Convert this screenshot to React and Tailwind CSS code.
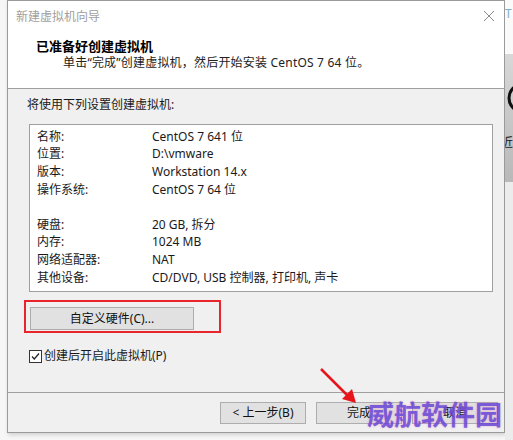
import React from 'react';

const font = { fontFamily: '"Noto Sans", "Noto Sans CJK SC", sans-serif' };

const rows = [
  ['名称:', 'CentOS 7 641 位'],
  ['位置:', 'D:\\vmware'],
  ['版本:', 'Workstation 14.x'],
  ['操作系统:', 'CentOS 7 64 位'],
  ['', ''],
  ['硬盘:', '20 GB, 拆分'],
  ['内存:', '1024 MB'],
  ['网络适配器:', 'NAT'],
  ['其他设备:', 'CD/DVD, USB 控制器, 打印机, 声卡'],
];

const WinButton = ({ children, className = '' }) => (
  <div className={`h-[22px] border border-[#adadad] bg-[#e1e1e1] flex items-center justify-center text-[12px] text-[#111] ${className}`}>
    {children}
  </div>
);

export default function App() {
  return (
    <div className="relative w-[513px] h-[440px] overflow-hidden bg-[#f6f6f6] flex text-[#1a1a1a]" style={font}>
      {/* left gutter */}
      <div className="w-[7px] shrink-0" />

      {/* Wizard dialog */}
      <div className="w-[498px] h-[433px] shrink-0 border border-[#9a9a9a] flex flex-col shadow-[1px_2px_4px_rgba(0,0,0,0.15)]">
        {/* title bar + header */}
        <div className="bg-white border-b border-[#a0a0a0]">
          <div className="h-[29px] flex items-center justify-between pl-[8px] pr-[8px]">
            <span className="text-[12px] text-[#a0a0a0] mt-[2px]">新建虚拟机向导</span>
            <svg width="12" height="12" viewBox="0 0 12 12" className="mr-[1px] mt-[1px]">
              <path d="M1 1 L11 11 M11 1 L1 11" stroke="#8a8a8a" strokeWidth="1" />
            </svg>
          </div>
          <div className="h-[58px] pt-[8px]">
            <div className="pl-[28px] text-[13px] font-bold leading-[16px] text-black">已准备好创建虚拟机</div>
            <div className="pl-[55px] text-[12px] leading-[16px] mt-[1px] text-[#222] tracking-[0.2px]">
              单击“完成”创建虚拟机，然后开始安装 CentOS 7 64 位。
            </div>
          </div>
        </div>

        {/* body */}
        <div className="flex-1 bg-[#f0f0f0] pt-[8px] flex flex-col">
          <div className="pl-[19px] text-[12px] leading-[16px]">将使用下列设置创建虚拟机:</div>
          <div className="ml-[21px] mt-[11px] w-[464px] h-[168px] bg-white border border-[#a0a0a0] pt-[3px] pl-[7px]">
            {rows.map(([k, v], i) => (
              <div key={i} className="flex h-[17.6px] items-center text-[12px]">
                <span className="w-[115px] shrink-0">{k}</span>
                <span>{v}</span>
              </div>
            ))}
          </div>

          <div className="ml-[16px] mt-[8px] w-[197px] h-[33px] border-2 border-[#e8242c] pl-[4px] pt-[5px]">
            <WinButton className="w-[164px] h-[23px]">自定义硬件(C)...</WinButton>
          </div>

          <div className="ml-[21px] mt-[14px] flex items-center gap-[2px] text-[12px]">
            <svg width="13" height="13" viewBox="0 0 13 13">
              <rect x="0.5" y="0.5" width="12" height="12" fill="white" stroke="#333" />
              <path d="M3 6.5 L5.3 9 L10 3.5" fill="none" stroke="#222" strokeWidth="1.2" />
            </svg>
            <span>创建后开启此虚拟机(P)</span>
          </div>
        </div>

        {/* footer */}
        <div className="h-[40px] bg-[#f0f0f0] border-t border-[#a0a0a0] flex justify-end items-start pt-[9px] pr-[6px] gap-[10px]">
          <WinButton className="w-[86px]">&lt; 上一步(B)</WinButton>
          <WinButton className="w-[86px]">完成</WinButton>
          <WinButton className="w-[86px]">取消</WinButton>
        </div>
      </div>

      {/* background window peeking out on the right */}
      <div className="flex-1 flex flex-col overflow-hidden">
        <div className="h-[54px] bg-[#fafafa] pt-[8px] text-[12px] text-[#7fb0d0] leading-none">T</div>
        <div className="h-[128px] bg-gradient-to-b from-[#d8d8d8] to-[#b8b8b8] overflow-hidden">
          <svg width="20" height="40" viewBox="0 0 20 40" className="mt-[24px]">
            <circle cx="18" cy="20" r="14" fill="none" stroke="#111" strokeWidth="3" />
          </svg>
          <div className="text-[12px] leading-none mt-[19px] -ml-[4px]">近</div>
        </div>
        <div className="flex-1 bg-[#ececec]" />
      </div>

      {/* red annotation arrow */}
      <svg className="absolute left-[316px] top-[364px]" width="46" height="46" viewBox="0 0 46 46">
        <path d="M5 5 L33 33" stroke="#e8141b" strokeWidth="2.5" />
        <path d="M40 39 L26 35 L36 25 Z" fill="#e8141b" />
      </svg>

      {/* watermark */}
      <div
        className="absolute left-[367px] top-[396px] text-[27px] font-bold leading-[36px] text-[rgba(92,72,220,0.8)]"
        style={{ fontFamily: '"Noto Sans CJK SC", sans-serif', textShadow: '0 0 2px rgba(230,80,160,0.5)' }}
      >
        威航软件园
      </div>
    </div>
  );
}
